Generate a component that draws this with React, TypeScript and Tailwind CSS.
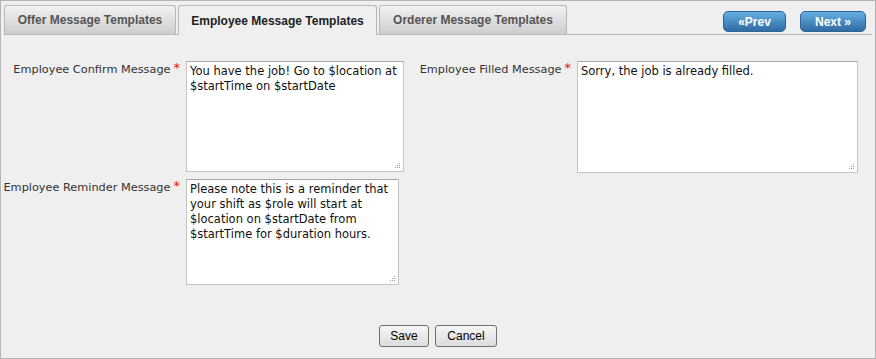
import { useState } from "react";

const tabs = ["Offer Message Templates", "Employee Message Templates", "Orderer Message Templates"];
const tabWidths = ["w-[172px]", "w-[199px]", "w-[188px]"];

function Label({ text, className = "" }: { text: string; className?: string }) {
  return (
    <div className={`flex justify-end pr-[6px] pt-[1px] text-[11.3px] leading-[15px] text-[#333] ${className}`}>
      <span className="whitespace-nowrap">{text}</span>
      <span className="ml-[3px] text-[13px] leading-[12px] text-[#e0201b]">*</span>
    </div>
  );
}

function Field({ value, className }: { value: string; className: string }) {
  return (
    <div className={`relative ${className}`}>
      <textarea
        defaultValue={value}
        className="block h-full w-full resize-none border border-[#c4c4c4] border-t-[#a9a9a9] bg-white px-[3px] py-[2px] text-[11.5px] leading-[15px] text-[#111] outline-none"
        style={{ fontFamily: "'DejaVu Sans', Verdana, sans-serif" }}
      />
      {/* resize grip */}
      <svg className="absolute bottom-[3px] right-[3px]" width="7" height="7" viewBox="0 0 7 7">
        <g fill="#a0a0a0">
          <rect x="5" y="1" width="1" height="1" />
          <rect x="3" y="3" width="1" height="1" />
          <rect x="5" y="3" width="1" height="1" />
          <rect x="1" y="5" width="1" height="1" />
          <rect x="3" y="5" width="1" height="1" />
          <rect x="5" y="5" width="1" height="1" />
        </g>
      </svg>
    </div>
  );
}

export default function App() {
  const [active, setActive] = useState(1);

  return (
    <div
      className="flex h-[359px] w-[876px] flex-col border border-[#b4b4b4] bg-[#efefef]"
      style={{ fontFamily: "'DejaVu Sans', Verdana, sans-serif" }}
    >
      <div className="mx-[3px] flex h-[34px] items-end gap-[2px] border-b border-[#b8b8b8] font-['Liberation_Sans',Arial,sans-serif]">
        {tabs.map((tab, i) =>
          i === active ? (
            <button
              key={tab}
              onClick={() => setActive(i)}
              className={`-mb-px h-[30px] ${tabWidths[i]} rounded-t-[3px] border border-b-0 border-[#b8b8b8] bg-[#efefef] text-[12px] font-bold text-[#222]`}
            >
              {tab}
            </button>
          ) : (
            <button
              key={tab}
              onClick={() => setActive(i)}
              className={`h-[29px] ${tabWidths[i]} rounded-t-[3px] border border-b-0 border-[#b8b8b8] bg-gradient-to-b from-[#f2f2f2] to-[#cdcdcd] text-[12px] font-bold text-[#555]`}
            >
              {tab}
            </button>
          )
        )}
        <div className="ml-auto mr-[6px] flex gap-[14px] self-start pt-[10px]">
          <button className="h-[21px] w-[63px] rounded-[5px] border border-[#2d6496] bg-gradient-to-b from-[#66b0e3] to-[#2e6ca3] text-[12px] font-bold text-white">
            «Prev
          </button>
          <button className="h-[21px] w-[66px] rounded-[5px] border border-[#2d6496] bg-gradient-to-b from-[#66b0e3] to-[#2e6ca3] text-[12px] font-bold text-white">
            Next »
          </button>
        </div>
      </div>

      <div className="flex flex-1 flex-col pt-[26px]">
        <div className="flex items-start">
          <Label text="Employee Confirm Message" className="w-[185px]" />
          <Field
            value={"You have the job! Go to $location at $startTime on $startDate"}
            className="h-[111px] w-[218px]"
          />
          <Label text="Employee Filled Message" className="w-[173px]" />
          <Field value="Sorry, the job is already filled." className="h-[112px] w-[281px]" />
        </div>
        <div className="mt-[6px] flex items-start">
          <Label text="Employee Reminder Message" className="w-[185px]" />
          <Field
            value={
              "Please note this is a reminder that your shift as $role will start at $location on $startDate from $startTime for $duration hours."
            }
            className="h-[106px] w-[213px]"
          />
        </div>
        <div className="mt-auto flex justify-center gap-[6px] pb-[11px] font-['Liberation_Sans',Arial,sans-serif]">
          <button className="h-[22px] w-[50px] rounded-[3px] border border-[#707070] bg-gradient-to-b from-[#f6f6f6] to-[#dcdcdc] text-[12px] text-black">
            Save
          </button>
          <button className="h-[22px] w-[62px] rounded-[3px] border border-[#707070] bg-gradient-to-b from-[#f6f6f6] to-[#dcdcdc] text-[12px] text-black">
            Cancel
          </button>
        </div>
      </div>
    </div>
  );
}
